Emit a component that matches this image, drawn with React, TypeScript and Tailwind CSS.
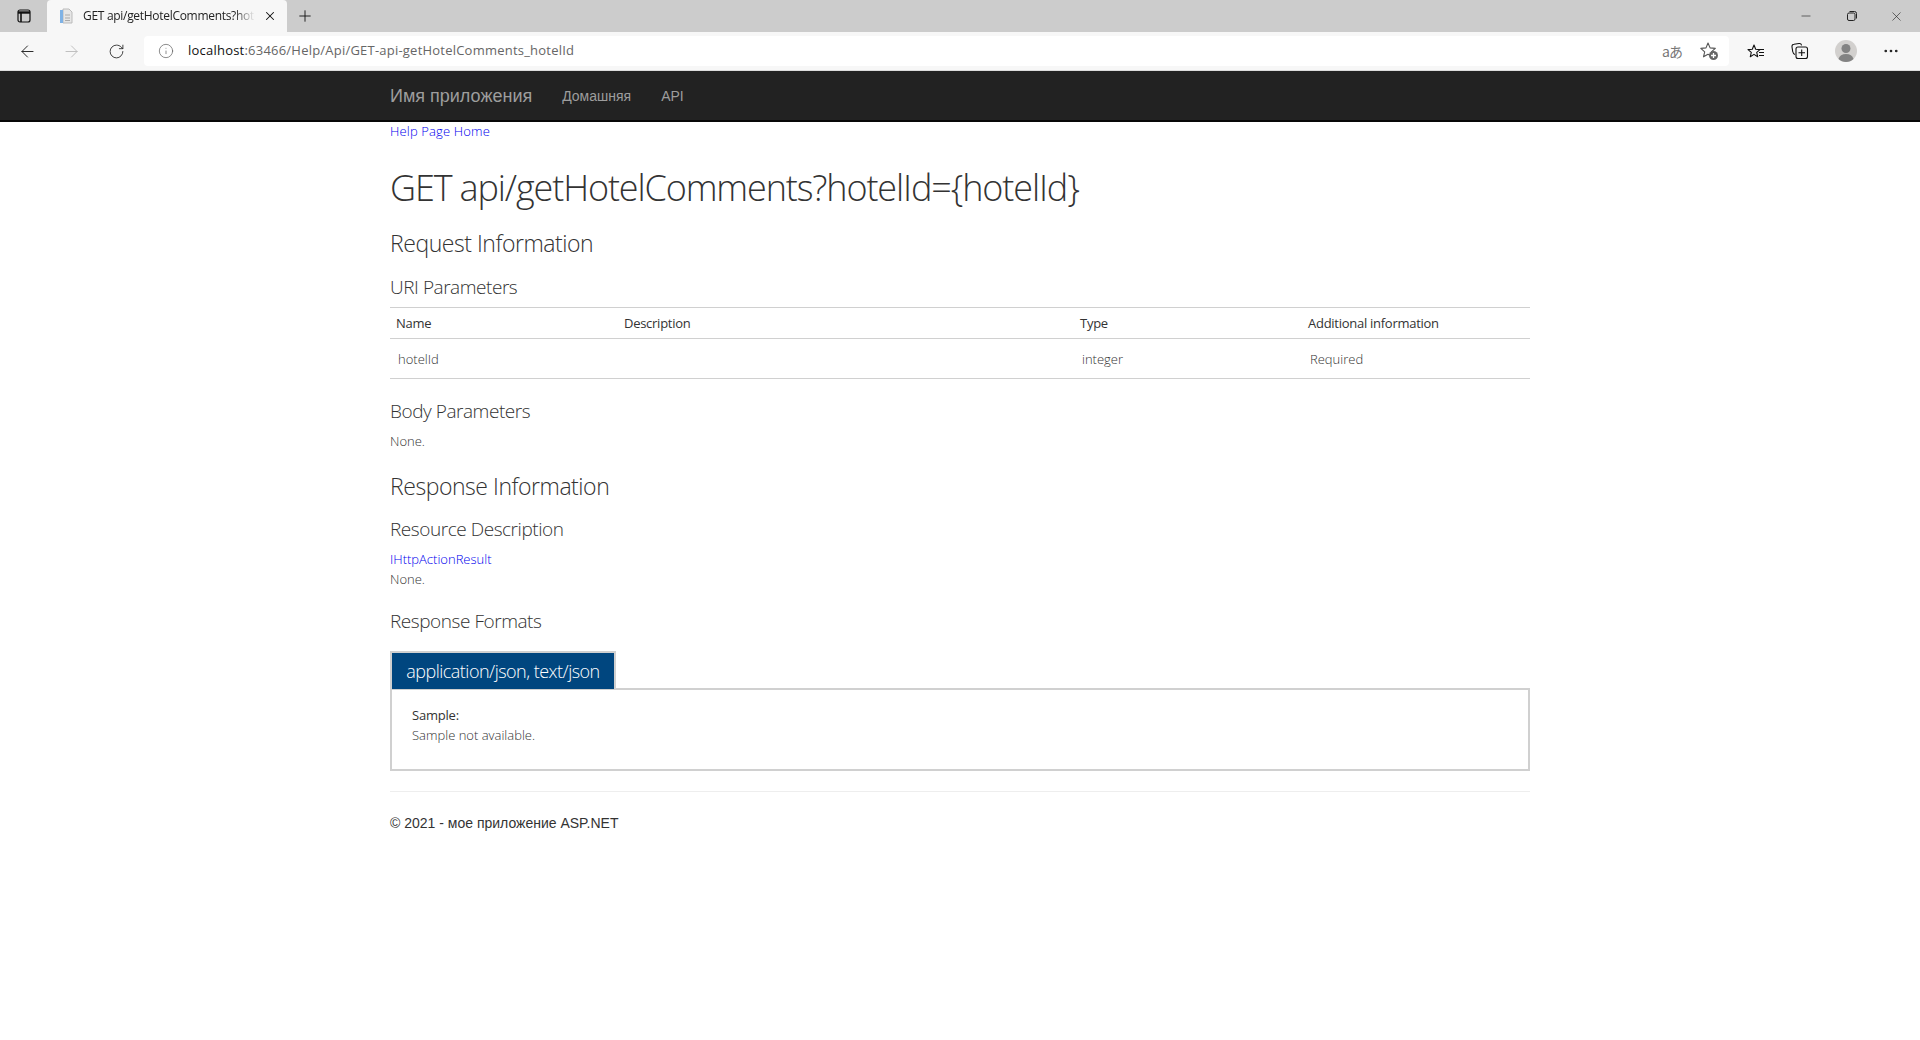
import { ArrowLeft, ArrowRight, Info, Minus, MoreHorizontal, Plus, RotateCw, X } from "lucide-react";

const light = "font-['Open_Sans',sans-serif] font-light";

const TabsIcon = () => (
  <svg width="14" height="14" viewBox="0 0 14 14" fill="none" stroke="#111" strokeWidth="1.2">
    <rect x="1" y="1" width="12" height="12" rx="2" />
    <path d="M1 3.5h12" strokeWidth="2.4" />
    <path d="M4 3v10" strokeWidth="1.6" />
  </svg>
);

const PageIcon = () => (
  <svg width="14" height="16" viewBox="0 0 14 16">
    <path d="M4 1h6l3 3v11H4z" fill="#e6e6e6" stroke="#bbb" />
    <rect x="1" y="2" width="3" height="13" fill="#7fb2e5" />
    <path d="M6 7h5M6 10h5M6 12.5h5" stroke="#aaa" />
  </svg>
);

const RestoreIcon = () => (
  <svg width="12" height="12" viewBox="0 0 12 12" fill="none" stroke="#222" strokeWidth="1">
    <rect x="1.5" y="3" width="7.5" height="7.5" rx="1.5" />
    <path d="M3.5 1.5h5a2 2 0 0 1 2 2v5" />
  </svg>
);

const StarAddIcon = () => (
  <svg width="20" height="20" viewBox="0 0 20 20" fill="none">
    <path d="M9 2l2.1 4.9 5.2.5-3.900 3.400 1.100 5-4.500-2.600-4.500 2.600 1.200-5L1.800 7.400 7 6.900z" stroke="#555" strokeWidth="1.1" strokeLinejoin="round" />
    <circle cx="14.5" cy="14.5" r="4.5" fill="#666" />
    <path d="M14.5 12v5M12 14.5h5" stroke="#fff" strokeWidth="1.3" />
  </svg>
);

const FavoritesIcon = () => (
  <svg width="18" height="18" viewBox="0 0 18 18" fill="none" stroke="#111" strokeWidth="1.1">
    <path d="M7 1.500l1.700 4.200 4.300.4-3.300 2.800 1 4.300L7 10.900l-3.700 2.300 1-4.300L1 6.100l4.300-.4z" strokeLinejoin="round" transform="translate(0 1.500)" />
    <path d="M12 7.500h5M12 10.500h5M12 13.500h5" />
  </svg>
);

const CollectionsIcon = () => (
  <svg width="18" height="18" viewBox="0 0 18 18" fill="none" stroke="#111" strokeWidth="1.1">
    <path d="M4 12.500C2.500 12 2 11 1.700 9.500L1 5c-.2-1.500.5-2.500 2-2.700L8 1.500c1.300-.2 2.300.5 2.600 1.800" />
    <rect x="5" y="5" width="11.500" height="11.500" rx="2" />
    <path d="M10.700 7.500v6.500M7.500 10.700H14" />
  </svg>
);

const Avatar = () => (
  <svg width="22" height="22" viewBox="0 0 22 22">
    <circle cx="11" cy="11" r="11" fill="#d2d0ce" />
    <circle cx="11" cy="8.500" r="4.500" fill="#838383" />
    <path d="M3.500 19c1-3.500 3.500-5 7.500-5s6.500 1.500 7.500 5c-2 2-4.500 3-7.500 3s-5.500-1-7.500-3z" fill="#838383" />
  </svg>
);

function BrowserChrome() {
  return (
    <div className="font-['Open_Sans',sans-serif]">
      <div className="h-8 bg-[#cccccc] flex items-center">
        <div className="w-[47px] flex justify-center"><TabsIcon /></div>
        <div className="h-8 w-[240px] bg-[#f7f7f7] rounded-t-[4px] flex items-center pl-[12px] pr-[10px]">
          <PageIcon />
          <span className="ml-[10px] w-[172px] overflow-hidden whitespace-nowrap text-[12px] tracking-[-0.3px] text-[#222] [mask-image:linear-gradient(to_right,black_88%,transparent)]">GET api/getHotelComments?hotelId={"{hotelId}"}</span>
          <X size={14} strokeWidth={1.8} className="ml-auto text-[#111]" />
        </div>
        <Plus size={18} strokeWidth={1.2} className="ml-[9px] text-[#111]" />
        <div className="ml-auto flex items-center text-[#222]">
          <Minus size={14} strokeWidth={1.1} className="mr-[33px]" />
          <RestoreIcon />
          <X size={15} strokeWidth={1} className="ml-[31px] mr-[16px]" />
        </div>
      </div>
      <div className="h-[39px] bg-[#f7f7f7] flex items-center border-b border-[#dcdcdc]">
        <ArrowLeft size={19} strokeWidth={1.2} className="ml-[18px] text-[#222]" />
        <ArrowRight size={19} strokeWidth={1.2} className="ml-[25px] text-[#bdbdbd]" />
        <RotateCw size={17} strokeWidth={1.2} className="ml-[27px] text-[#222]" />
        <div className="ml-[19px] w-[1585px] h-[30px] bg-white rounded-[4px] flex items-center">
          <Info size={16} strokeWidth={1} className="ml-[14px] text-[#555]" />
          <span className="ml-[14px] text-[13px] tracking-[0.22px] text-[#666]"><span className="text-[#111]">localhost</span>:63466/Help/Api/GET-api-getHotelComments_hotelId</span>
          <span className="ml-auto text-[14px] text-[#777] font-['Noto_Sans_CJK_JP','Open_Sans',sans-serif] tracking-[-1px]">aあ</span>
          <span className="ml-[17px] mr-[10px] flex"><StarAddIcon /></span>
        </div>
        <span className="ml-[18px] flex"><FavoritesIcon /></span>
        <span className="ml-[26px] flex"><CollectionsIcon /></span>
        <span className="ml-[26px] flex"><Avatar /></span>
        <MoreHorizontal size={18} strokeWidth={1.6} className="ml-[25px] text-[#222]" />
      </div>
    </div>
  );
}

function H3({ children }: { children: string }) {
  return <h3 className={`${light} text-[19px] leading-[26px] tracking-[-0.45px] text-[#333]`}>{children}</h3>;
}

function H2({ children }: { children: string }) {
  return <h2 className={`${light} text-[23px] leading-[30px] tracking-[-0.45px] text-[#333]`}>{children}</h2>;
}

export default function App() {
  return (
    <div className="min-h-[1040px] bg-white">
      <BrowserChrome />
      <nav className="h-[51px] bg-[#222222] border-b-2 border-[#080808] font-['Liberation_Sans',sans-serif]">
        <div className="w-[1140px] mx-auto flex items-center h-full pt-[1px] text-[#9d9d9d]">
          <span className="text-[18px]">Имя приложения</span>
          <span className="ml-[30px] text-[14px]">Домашняя</span>
          <span className="ml-[30px] text-[14px]">API</span>
        </div>
      </nav>
      <main className={`w-[1140px] mx-auto ${light} text-[#333] text-[13px]`}>
        <a className="block leading-[18px] text-[#0000ee] tracking-[0.15px]">Help Page Home</a>
        <h1 className="mt-[23px] text-[36px] leading-[50px] tracking-[-1.13px] font-light">GET api/getHotelComments?hotelId={"{hotelId}"}</h1>
        <div className="mt-[15px]"><H2>Request Information</H2></div>
        <div className="mt-[16px]"><H3>URI Parameters</H3></div>
        <table className="mt-[7px] w-full table-fixed border-y border-[#d0d0d0]">
          <thead>
            <tr className="border-b border-[#d0d0d0] h-[31px] text-left font-normal tracking-[-0.27px]">
              <th className="w-[228px] pl-[6px] pt-[2px] font-normal">Name</th>
              <th className="w-[456px] pl-[6px] pt-[2px] font-normal">Description</th>
              <th className="w-[228px] pl-[6px] pt-[2px] font-normal">Type</th>
              <th className="pl-[6px] pt-[2px] font-normal">Additional information</th>
            </tr>
          </thead>
          <tbody>
            <tr className="h-[40px]">
              <td className="pl-[8px] pt-[2px]">hotelId</td>
              <td className="pl-[8px] pt-[2px]"></td>
              <td className="pl-[8px] pt-[2px]">integer</td>
              <td className="pl-[8px] pt-[2px]">Required</td>
            </tr>
          </tbody>
        </table>
        <div className="mt-[19px]"><H3>Body Parameters</H3></div>
        <p className="mt-[7px] leading-[20px]">None.</p>
        <div className="mt-[20px]"><H2>Response Information</H2></div>
        <div className="mt-[15px]"><H3>Resource Description</H3></div>
        <a className="block mt-[7px] leading-[20px] text-[#0000ee]">IHttpActionResult</a>
        <p className="leading-[20px]">None.</p>
        <div className="mt-[19px]"><H3>Response Formats</H3></div>
        <div className="mt-[17px]">
          <div className="flex">
            <div className="h-[38px] w-[226px] bg-[#00467f] border-t-2 border-x-2 border-[#d0d0d0] text-white text-[18px] flex items-center justify-center tracking-[-0.52px]">application/json, text/json</div>
          </div>
          <div className="-mt-[1px] border-2 border-[#d0d0d0] h-[83px] px-[20px] pt-[15px]">
            <div className="leading-[20px] font-normal tracking-[-0.2px]">Sample:</div>
            <div className="leading-[20px]">Sample not available.</div>
          </div>
        </div>
        <hr className="mt-[20px] border-[#eeeeee]" />
        <footer className="mt-[21px] font-['Liberation_Sans',sans-serif] font-normal text-[14px] leading-[20px]">© 2021 - мое приложение ASP.NET</footer>
      </main>
    </div>
  );
}
